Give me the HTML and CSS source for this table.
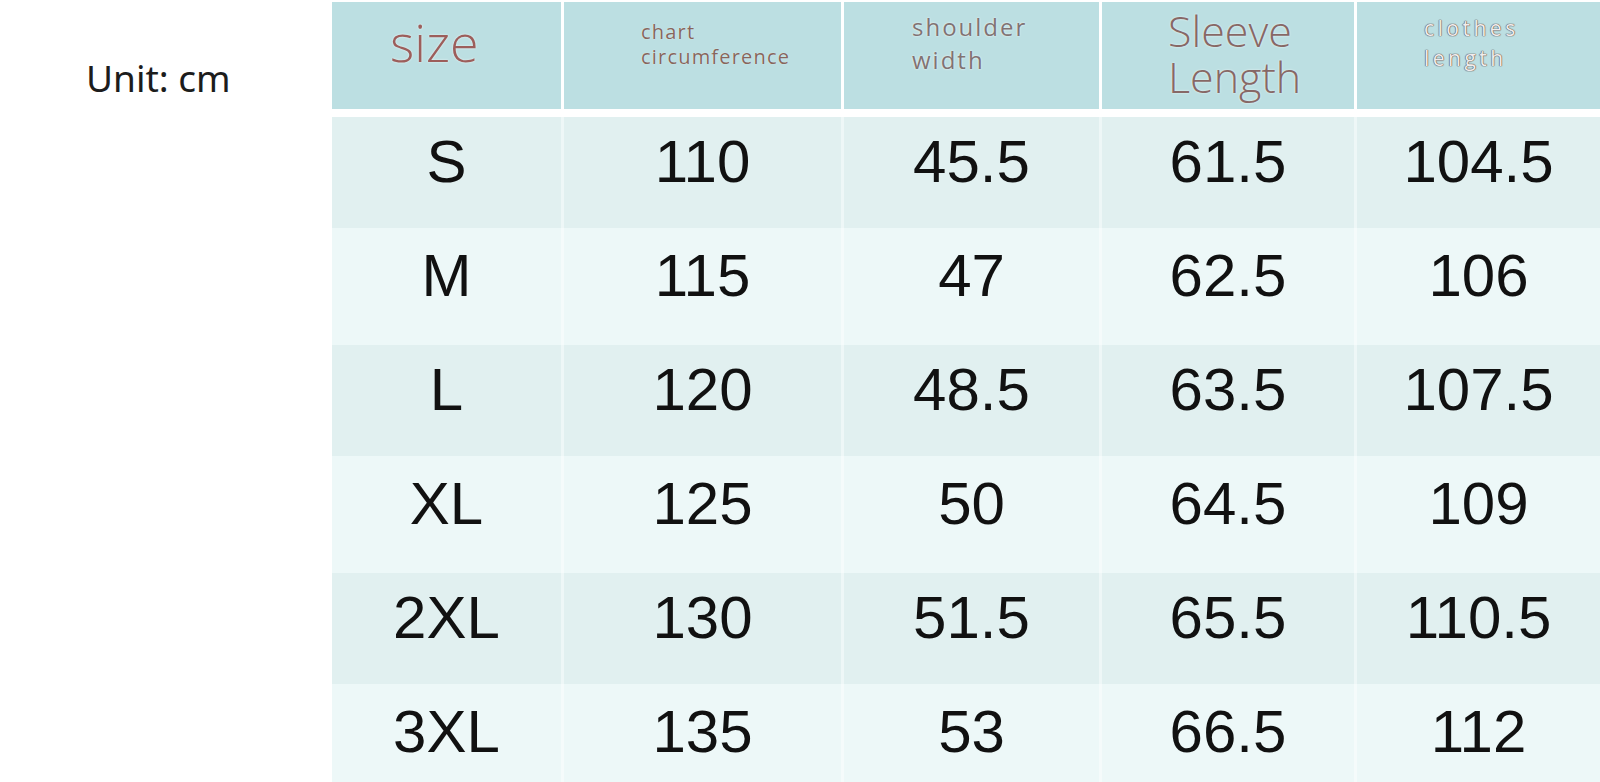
FILE: index.html
```html
<!DOCTYPE html>
<html lang="en">
<head>
<meta charset="utf-8">
<title>Size chart</title>
<link rel="stylesheet" href="styles.css">
</head>
<body>
<div class="page">
  <div class="unit">Unit: cm</div>
  <div class="chart">
    <div class="head">
      <div class="hcell h-size"><div class="lbl-size">size</div></div>
      <div class="hcell h-chest"><div>chart</div><div>circumference</div></div>
      <div class="hcell h-shoulder"><div>shoulder</div><div>width</div></div>
      <div class="hcell h-sleeve"><div class="ln1">Sleeve</div><div class="ln2">Length</div></div>
      <div class="hcell h-length"><div>clothes</div><div>length</div></div>
    </div>
    <div class="rows">
      <div class="row row-dark"><div class="cell">S</div><div class="cell">110</div><div class="cell">45.5</div><div class="cell">61.5</div><div class="cell">104.5</div></div>
      <div class="row row-light"><div class="cell">M</div><div class="cell">115</div><div class="cell">47</div><div class="cell">62.5</div><div class="cell">106</div></div>
      <div class="row row-dark"><div class="cell">L</div><div class="cell">120</div><div class="cell">48.5</div><div class="cell">63.5</div><div class="cell">107.5</div></div>
      <div class="row row-light"><div class="cell">XL</div><div class="cell">125</div><div class="cell">50</div><div class="cell">64.5</div><div class="cell">109</div></div>
      <div class="row row-dark"><div class="cell">2XL</div><div class="cell">130</div><div class="cell">51.5</div><div class="cell">65.5</div><div class="cell">110.5</div></div>
      <div class="row row-light"><div class="cell">3XL</div><div class="cell">135</div><div class="cell">53</div><div class="cell">66.5</div><div class="cell">112</div></div>
    </div>
  </div>
</div>
</body>
</html>
```
FILE: styles.css
```css
html, body {
  margin: 0;
  padding: 0;
  background: #ffffff;
}
body {
  width: 1600px;
  height: 782px;
  overflow: hidden;
}
.page {
  display: flex;
  align-items: flex-start;
}
.unit {
  width: 332px;
  flex: 0 0 332px;
  box-sizing: border-box;
  padding: 59px 0 0 86px;
  font-family: "Noto Sans", "Open Sans", sans-serif;
  font-size: 37px;
  line-height: 37px;
  color: #1c1c1c;
}
.chart {
  flex: 1 1 auto;
  min-width: 0;
  padding-top: 2px;
}
.head {
  display: grid;
  grid-template-columns: 229px 277px 255px 252px 1fr;
  column-gap: 3px;
  height: 107px;
  background: #ffffff;
}
.hcell {
  background: #bcdfe2;
  box-sizing: border-box;
  font-family: "Open Sans", "Noto Sans", sans-serif;
  white-space: nowrap;
}
.h-size {
  padding: 14px 0 0 58px;
  font-size: 52px;
  line-height: 52px;
  font-weight: 300;
  color: #9c5e5b;
  text-shadow: 0 0 2px #f2fbfb;
}
.h-chest {
  padding: 17px 0 0 77px;
  font-size: 20px;
  line-height: 25px;
  letter-spacing: 1.2px;
  color: #86665c;
  text-shadow: 0 0 1px #f2fbfb;
}
.h-shoulder {
  padding: 8px 0 0 68px;
  font-size: 24px;
  line-height: 33px;
  letter-spacing: 2px;
  color: #807373;
  text-shadow: 0 0 2px #ffffff;
}
.h-sleeve {
  display: flex;
  flex-direction: column;
  padding: 4px 0 0 66px;
  font-size: 43px;
  line-height: 49px;
  font-weight: 300;
  color: #876866;
  text-shadow: 0 0 2px #f2fbfb;
}
.h-sleeve .ln1 {
  height: 46px;
}
.h-length {
  padding: 11px 0 0 67px;
  font-size: 21px;
  line-height: 30px;
  letter-spacing: 3.5px;
  color: #f1ecec;
  text-shadow: 0 0 1px #5e5454, 0 0 1px #5e5454, 0 0 1px #5e5454;
}
.rows {
  margin-top: 8px;
  background: #f4fafa;
}
.row {
  display: grid;
  grid-template-columns: 229px 277px 255px 252px 1fr;
  column-gap: 3px;
}
.row-dark {
  height: 111px;
  background: #eef7f7;
}
.row-light {
  height: 117px;
  background: #f5fbfb;
}
.row-dark .cell {
  background: #e1f0f0;
}
.row-light .cell {
  background: #edf8f8;
}
.cell {
  display: flex;
  align-items: center;
  justify-content: center;
  padding-bottom: 22px;
  box-sizing: border-box;
  font-family: "Liberation Sans", Arial, sans-serif;
  font-size: 60px;
  line-height: 60px;
  color: #111111;
}
```
